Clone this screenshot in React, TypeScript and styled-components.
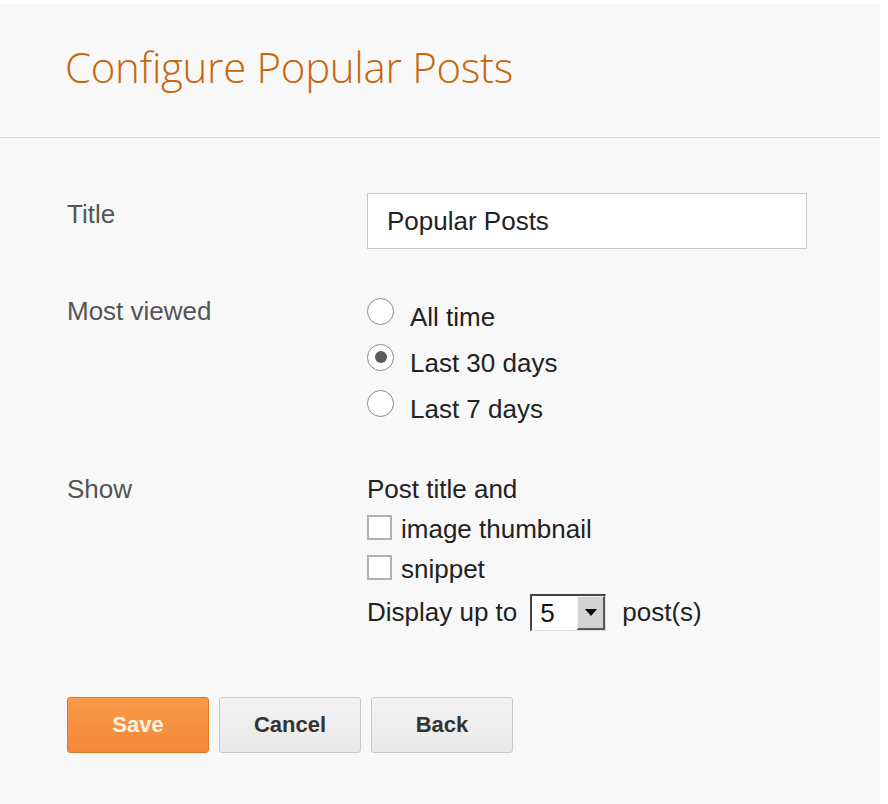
import styled, { createGlobalStyle } from "styled-components";

const GlobalStyle = createGlobalStyle`
  html, body {
    margin: 0;
    padding: 0;
    background: #ffffff;
  }
  body {
    font-family: "Liberation Sans", Arial, sans-serif;
  }
`;

const Page = styled.div`
  width: 880px;
  height: 800px;
  margin-top: 4px;
  background: #f8f8f8;
  overflow: hidden;
`;

const Header = styled.div`
  height: 134px;
  border-bottom: 1px solid #dcdcdc;
  display: flex;
  align-items: center;
  padding-left: 65px;
  box-sizing: border-box;
`;

const Heading = styled.h1`
  margin: 0 0 9px;
  font-family: "Open Sans", sans-serif;
  font-weight: 300;
  font-size: 42px;
  font-stretch: 88%;
  letter-spacing: -0.3px;
  color: #c7660c;
`;

const Form = styled.div`
  padding: 55px 0 0 67px;
  display: flex;
  flex-direction: column;
`;

const FieldRow = styled.div<{ $gap: number }>`
  display: grid;
  grid-template-columns: 300px 440px;
  margin-bottom: ${({ $gap }) => $gap}px;
`;

const Label = styled.div<{ $offset: number }>`
  padding-top: ${({ $offset }) => $offset}px;
  font-size: 26px;
  line-height: 34px;
  color: #555;
`;

const TextInput = styled.div`
  height: 56px;
  box-sizing: border-box;
  border: 1px solid #c8c8c8;
  background: #ffffff;
  padding: 0 19px;
  display: flex;
  align-items: center;
  font-size: 26px;
  color: #222;
`;

const Options = styled.div`
  display: flex;
  flex-direction: column;
`;

const OptionLine = styled.div<{ $height: number }>`
  height: ${({ $height }) => $height}px;
  display: flex;
  align-items: center;
  font-size: 26px;
  color: #222;
  white-space: nowrap;
`;

const Radio = styled.span<{ $checked?: boolean }>`
  width: 27px;
  height: 27px;
  box-sizing: border-box;
  border: 1px solid #8a8a8a;
  border-radius: 50%;
  background: #ffffff;
  margin-right: 16px;
  margin-top: -12px;
  display: flex;
  align-items: center;
  justify-content: center;

  &::after {
    content: "";
    display: ${({ $checked }) => ($checked ? "block" : "none")};
    width: 12px;
    height: 12px;
    border-radius: 50%;
    background: #5a5a5a;
  }
`;

const Checkbox = styled.span`
  width: 25px;
  height: 25px;
  box-sizing: border-box;
  border: 2px solid #b0b0b0;
  background: #ffffff;
  margin-right: 9px;
  margin-top: -4px;
`;

const Select = styled.span`
  display: inline-flex;
  width: 76px;
  height: 37px;
  box-sizing: border-box;
  margin: 0 16px 0 13px;
  border-top: 2px solid #444;
  border-left: 2px solid #444;
  border-bottom: 1px solid #ddd;
  border-right: 1px solid #ddd;
  background: #ffffff;
`;

const SelectValue = styled.span`
  flex: 1;
  padding-left: 8px;
  font-size: 26px;
  line-height: 34px;
  color: #111;
`;

const SelectArrow = styled.span`
  width: 28px;
  box-sizing: border-box;
  background: #d2d2d2;
  border-top: 1px solid #f4f4f4;
  border-left: 1px solid #f4f4f4;
  border-right: 2px solid #555;
  border-bottom: 2px solid #555;
  display: flex;
  align-items: center;
  justify-content: center;
`;

const Buttons = styled.div`
  display: flex;
  gap: 10px;
  margin-top: 62px;
`;

const Button = styled.button<{ $primary?: boolean }>`
  width: 142px;
  height: 56px;
  border-radius: 3px;
  font-family: "Liberation Sans", Arial, sans-serif;
  font-weight: 700;
  font-size: 22px;
  cursor: pointer;
  border: 1px solid ${({ $primary }) => ($primary ? "#e0782a" : "#c9c9c9")};
  background: ${({ $primary }) =>
    $primary
      ? "linear-gradient(#f99a48, #f4883a)"
      : "linear-gradient(#f2f2f2, #e9e9e9)"};
  color: ${({ $primary }) => ($primary ? "#fff4e0" : "#333")};
`;

export default function App() {
  return (
    <>
      <GlobalStyle />
      <Page>
        <Header>
          <Heading>Configure Popular Posts</Heading>
        </Header>
        <Form>
          <FieldRow $gap={45}>
            <Label $offset={4}>Title</Label>
            <TextInput>Popular Posts</TextInput>
          </FieldRow>

          <FieldRow $gap={37}>
            <Label $offset={0}>Most viewed</Label>
            <Options>
              <OptionLine $height={46}>
                <Radio />
                All time
              </OptionLine>
              <OptionLine $height={46}>
                <Radio $checked />
                Last 30 days
              </OptionLine>
              <OptionLine $height={46}>
                <Radio />
                Last 7 days
              </OptionLine>
            </Options>
          </FieldRow>

          <FieldRow $gap={0}>
            <Label $offset={3}>Show</Label>
            <Options>
              <OptionLine $height={40}>Post title and</OptionLine>
              <OptionLine $height={40}>
                <Checkbox />
                image thumbnail
              </OptionLine>
              <OptionLine $height={40}>
                <Checkbox />
                snippet
              </OptionLine>
              <OptionLine $height={46}>
                Display up to
                <Select>
                  <SelectValue>5</SelectValue>
                  <SelectArrow>
                    <svg width="12" height="7" viewBox="0 0 12 7">
                      <path d="M0 0 H12 L6 7 Z" fill="#000" />
                    </svg>
                  </SelectArrow>
                </Select>
                post(s)
              </OptionLine>
            </Options>
          </FieldRow>

          <Buttons>
            <Button $primary>Save</Button>
            <Button>Cancel</Button>
            <Button>Back</Button>
          </Buttons>
        </Form>
      </Page>
    </>
  );
}
